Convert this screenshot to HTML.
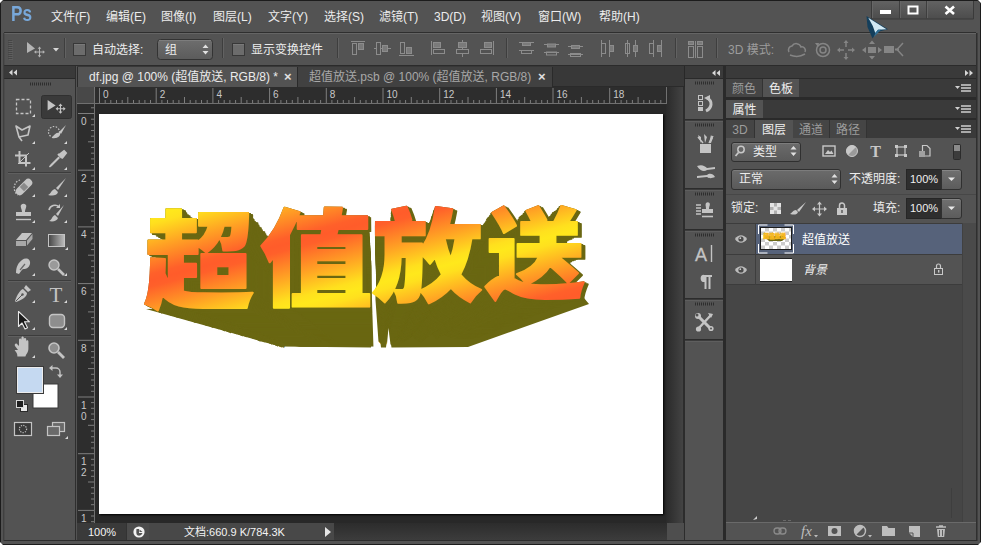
<!DOCTYPE html>
<html lang="zh-CN">
<head>
<meta charset="utf-8">
<title>Photoshop</title>
<style>
*{box-sizing:border-box;margin:0;padding:0}
html,body{width:981px;height:545px;overflow:hidden;background:#535353}
body{position:relative;font-family:"Liberation Sans","Noto Sans CJK SC",sans-serif;font-size:12px;color:#e6e6e6}
.abs{position:absolute}
#win{position:absolute;left:0;top:0;width:981px;height:545px;background:#535353;overflow:hidden}
/* menu */
#menubar{position:absolute;left:0;top:0;width:981px;height:32px;background:#535353}
#menubar .m{position:absolute;top:9px;font-size:12px;line-height:16px;color:#ececec;white-space:nowrap}
#pslogo{position:absolute;left:11px;top:0px;font-family:"Liberation Sans",sans-serif;font-weight:bold;font-size:22px;line-height:28px;color:#78a8da;transform:scaleX(0.78);transform-origin:0 0}
/* options bar */
#optbar{position:absolute;left:4px;top:32px;width:972px;height:34px;background:#535353;border-top:1px solid #2f2f2f;border-bottom:1px solid #2b2b2b;box-shadow:inset 0 1px 0 #656565}
.sep{position:absolute;top:38px;width:2px;height:22px;border-left:1px solid #3a3a3a;border-right:1px solid #626262}
.chk{position:absolute;width:13px;height:13px;background:#6a6a6a;border:1px solid #3a3a3a;box-shadow:inset 0 0 0 1px #777}
.lbl{position:absolute;white-space:nowrap;font-size:12px;line-height:16px;color:#ececec}
.dd{position:absolute;border:1px solid #303030;border-radius:3px;background:linear-gradient(#6b6b6b,#5a5a5a);box-shadow:inset 0 1px 0 #7c7c7c}
/* tools */
#tools{position:absolute;left:4px;top:66px;width:72px;height:474px;background:#535353;border-right:1px solid #2e2e2e}
#toolshead{position:absolute;left:0;top:0;width:71px;height:13px;background:#3a3a3a;border-bottom:1px solid #2a2a2a}
/* doc */
#doc{position:absolute;left:77px;top:66px;width:608px;height:475px;background:#282828;overflow:hidden}
#tabbar{position:absolute;left:0;top:0;width:607px;height:21px;background:#383838;border-bottom:1px solid #2a2a2a}
.tab{position:absolute;top:1px;height:20px;font-size:12px;line-height:21px;white-space:nowrap;padding-left:11px}
.tx{position:absolute;top:-1px;font-size:13px;font-weight:bold;color:#e0e0e0}
#tab1{left:0;width:221px;background:#535353;color:#ececec;border-right:1px solid #2a2a2a;border-left:1px solid #2a2a2a}
#tab2{left:221px;width:255px;background:#414141;color:#a8a8a8;border-right:1px solid #2a2a2a}
#canvas{position:absolute;left:22px;top:48px;width:564px;height:400px;background:#fff;box-shadow:1px 1px 2px #000}
#vscroll{position:absolute;left:589px;top:21px;width:19px;height:458px;background:linear-gradient(90deg,#2a2a2a,#434343);border-right:2px solid #2c2c2c}
#status{position:absolute;left:0;top:457px;width:607px;height:18px;background:#3a3a3a}
#zoomf{position:absolute;left:0;top:0;width:48px;height:17px;background:#3a3a3a;color:#f4f4f4;font-size:11px;line-height:18px;padding-left:11px}
#sticon{position:absolute;left:49px;top:0;width:23px;height:17px;background:#4c4c4c;border-left:1px solid #333}
#sticon svg{position:absolute;left:6px;top:3px}
#sttext{position:absolute;left:72px;top:0;width:185px;height:17px;background:#484848;color:#f4f4f4;font-size:11px;line-height:18px;padding-left:35px;white-space:nowrap}
#starrow{position:absolute;left:248px;top:4px;width:0;height:0;border-left:6px solid #e6e6e6;border-top:5px solid transparent;border-bottom:5px solid transparent}
#hscroll{position:absolute;left:257px;top:0;width:333px;height:17px;background:linear-gradient(#2c2c2c,#3c3c3c)}
#corner{position:absolute;left:590px;top:0;width:17px;height:17px;background:#4e4e4e}
/* right */
#dock{position:absolute;left:685px;top:66px;width:291px;height:474px;overflow:hidden;background:#535353}

/* dock */
#dockhead{position:absolute;left:0;top:0;width:291px;height:13px;background:#3a3a3a;border-bottom:1px solid #2a2a2a}
#iconcol{position:absolute;left:0;top:13px;width:38px;height:466px;background:#535353}
#dockgap{position:absolute;left:38px;top:0;width:3px;height:479px;background:#2a2a2a}
#panels{position:absolute;left:41px;top:13px;width:250px;height:466px;background:#2a2a2a}
.tabrow{position:absolute;left:0;width:250px;height:18px;background:#3a3a3a}
.ptab{position:absolute;top:0;height:18px;font-size:12px;line-height:20px;overflow:hidden;text-align:center;white-space:nowrap}
.ptab.on{background:#535353;color:#f0f0f0}
.ptab.off{background:#454545;color:#9c9c9c;border-right:1px solid #333}
.pmenu{position:absolute;right:5px;top:5px;width:16px;height:9px}
#layers{position:absolute;left:0;top:59px;width:250px;height:384px;background:#535353}
#layempty{position:absolute;left:0;top:85px;width:250px;height:299px;background:#464646}
#layscroll{position:absolute;left:236px;top:85px;width:14px;height:299px;background:#4a4a4a;border-left:1px solid #414141}
#laybar{position:absolute;left:0;top:443px;width:250px;height:19px;background:#535353;border-top:1px solid #6a6a6a}
.vbox{position:absolute;background:#2e2e2e;border:1px solid #262626;color:#f0f0f0;font-size:11px;line-height:19px;text-align:center}
.abtn{position:absolute;border:1px solid #303030;border-radius:0 3px 3px 0;background:linear-gradient(#707070,#5c5c5c);box-shadow:inset 0 1px 0 #858585}
.lrow{position:absolute;left:0;width:236px;height:31px;border-bottom:1px solid #3c3c3c;background:#535353}
</style>
</head>
<body>
<div id="win">
  <div id="menubar">
    <div id="pslogo">Ps</div>
    <div class="m" style="left:51px">文件(F)</div>
    <div class="m" style="left:106px">编辑(E)</div>
    <div class="m" style="left:161px">图像(I)</div>
    <div class="m" style="left:213px">图层(L)</div>
    <div class="m" style="left:268px">文字(Y)</div>
    <div class="m" style="left:324px">选择(S)</div>
    <div class="m" style="left:379px">滤镜(T)</div>
    <div class="m" style="left:434px">3D(D)</div>
    <div class="m" style="left:481px">视图(V)</div>
    <div class="m" style="left:538px">窗口(W)</div>
    <div class="m" style="left:599px">帮助(H)</div>
  </div>
  <div id="optbar"></div><!--OPT--><svg class="abs" style="left:0;top:32px" width="981" height="34" viewBox="0 32 981 34"><path d="M9 40v19M11 40v19" stroke="#3a3a3a" stroke-width="1" stroke-dasharray="1 1"/><path d="M10 41v19M12 41v19" stroke="#6a6a6a" stroke-width="1" stroke-dasharray="1 1"/><path d="M27 42l8 6.500l-8 4.500z" fill="#b4b4b4"/><path d="M39.500 48v8M35.500 52h8" stroke="#b4b4b4" stroke-width="1"/><path d="M39.500 46.500l1.800 2.200h-3.600zM39.500 57.500l1.800 -2.200h-3.600zM34 52l2.200 -1.800v3.600zM45 52l-2.200 -1.800v3.600z" fill="#b4b4b4"/><path d="M53 48h6l-3 3.500z" fill="#d6d6d6"/><path d="M64.5 38v20" stroke="#3e3e3e"/><path d="M65.5 38v20" stroke="#626262"/><path d="M222.5 38v20" stroke="#3e3e3e"/><path d="M223.5 38v20" stroke="#626262"/><path d="M337.5 38v20" stroke="#3e3e3e"/><path d="M338.5 38v20" stroke="#626262"/><path d="M506.5 38v20" stroke="#3e3e3e"/><path d="M507.5 38v20" stroke="#626262"/><path d="M675.5 38v20" stroke="#3e3e3e"/><path d="M676.5 38v20" stroke="#626262"/><path d="M716.5 38v20" stroke="#3e3e3e"/><path d="M717.5 38v20" stroke="#626262"/><rect x="73.5" y="43.500" width="12" height="12" fill="#6c6c6c" stroke="#383838"/><path d="M74 44.500h11" stroke="#7a7a7a"/><rect x="232.5" y="43.500" width="12" height="12" fill="#6c6c6c" stroke="#383838"/><path d="M233 44.500h11" stroke="#7a7a7a"/><defs><linearGradient id="ddg" x1="0" y1="0" x2="0" y2="1"><stop offset="0" stop-color="#6e6e6e"/><stop offset="1" stop-color="#5b5b5b"/></linearGradient></defs><rect x="157.500" y="39.500" width="55" height="20" rx="3" fill="url(#ddg)" stroke="#333"/><path d="M159 40.500h52" stroke="#7d7d7d"/><path d="M202.500 48l3 -3.500l3 3.500zM202.500 51l3 3.500l3 -3.500z" fill="#e0e0e0"/><path d="M351 41.500h14" stroke="#8c8c8c"/><rect x="352.5" y="43.5" width="4" height="11" fill="none" stroke="#8c8c8c" stroke-width="1"/><rect x="358.5" y="43.5" width="5" height="6" fill="#7a7a7a" stroke="#8c8c8c" stroke-width="1"/><path d="M374 48.500h17" stroke="#8c8c8c"/><rect x="376.5" y="42.5" width="4" height="12" fill="#535353" stroke="#8c8c8c" stroke-width="1"/><rect x="382.5" y="45.5" width="5" height="6" fill="#7a7a7a" stroke="#8c8c8c" stroke-width="1"/><path d="M399 55.500h15" stroke="#8c8c8c"/><rect x="400.5" y="42.5" width="4" height="11" fill="none" stroke="#8c8c8c" stroke-width="1"/><rect x="406.5" y="47.5" width="5" height="6" fill="#7a7a7a" stroke="#8c8c8c" stroke-width="1"/><path d="M431.500 41v14" stroke="#8c8c8c"/><rect x="433.5" y="42.5" width="7" height="5" fill="#7a7a7a" stroke="#8c8c8c" stroke-width="1"/><rect x="433.5" y="49.5" width="11" height="4" fill="none" stroke="#8c8c8c" stroke-width="1"/><path d="M462.500 40v17" stroke="#8c8c8c"/><rect x="458.5" y="42.5" width="8" height="5" fill="#7a7a7a" stroke="#8c8c8c" stroke-width="1"/><rect x="456.5" y="49.5" width="12" height="4" fill="#535353" stroke="#8c8c8c" stroke-width="1"/><path d="M493.500 41v14" stroke="#8c8c8c"/><rect x="484.5" y="42.5" width="7" height="5" fill="#7a7a7a" stroke="#8c8c8c" stroke-width="1"/><rect x="480.5" y="49.5" width="11" height="4" fill="none" stroke="#8c8c8c" stroke-width="1"/><path d="M519 42.500h15M519 50.500h15" stroke="#8c8c8c"/><rect x="522.5" y="42.5" width="8" height="3" fill="#7a7a7a" stroke="#8c8c8c" stroke-width="1"/><rect x="521.5" y="50.5" width="10" height="3" fill="none" stroke="#8c8c8c" stroke-width="1"/><path d="M544 44.500h15M544 52.500h15" stroke="#8c8c8c"/><rect x="547.5" y="44.0" width="8" height="3" fill="#7a7a7a" stroke="#8c8c8c" stroke-width="1"/><rect x="546.5" y="52.0" width="10" height="3" fill="none" stroke="#8c8c8c" stroke-width="1"/><path d="M568 46.500h15M568 54.500h15" stroke="#8c8c8c"/><rect x="571.5" y="45.5" width="8" height="3" fill="#7a7a7a" stroke="#8c8c8c" stroke-width="1"/><rect x="570.5" y="53.5" width="10" height="3" fill="none" stroke="#8c8c8c" stroke-width="1"/><path d="M601.500 40v17M609.500 40v17" stroke="#8c8c8c"/><rect x="601.5" y="43.5" width="4" height="10" fill="none" stroke="#8c8c8c" stroke-width="1"/><rect x="609.5" y="45.5" width="4" height="6" fill="#7a7a7a" stroke="#8c8c8c" stroke-width="1"/><path d="M627.500 40v17M635.500 40v17" stroke="#8c8c8c"/><rect x="625.5" y="43.5" width="4" height="10" fill="none" stroke="#8c8c8c" stroke-width="1"/><rect x="633.5" y="45.5" width="4" height="6" fill="#7a7a7a" stroke="#8c8c8c" stroke-width="1"/><path d="M653.500 40v17M661.500 40v17" stroke="#8c8c8c"/><rect x="649.5" y="43.5" width="4" height="10" fill="none" stroke="#8c8c8c" stroke-width="1"/><rect x="657.5" y="45.5" width="4" height="6" fill="#7a7a7a" stroke="#8c8c8c" stroke-width="1"/><rect x="688.5" y="41.5" width="5" height="3" fill="#7a7a7a" stroke="#8c8c8c" stroke-width="1"/><rect x="688.5" y="46.5" width="5" height="11" fill="none" stroke="#8c8c8c" stroke-width="1"/><rect x="697.5" y="41.5" width="5" height="3" fill="#7a7a7a" stroke="#8c8c8c" stroke-width="1"/><rect x="697.5" y="46.5" width="5" height="11" fill="none" stroke="#8c8c8c" stroke-width="1"/><path d="M695.500 41v17" stroke="#8c8c8c"/><path d="M789 52a4 4 0 0 1 3 -6a5 5 0 0 1 9 1a3.500 3.500 0 0 1 4 5" fill="none" stroke="#858585" stroke-width="1.500"/><path d="M790 55c5 2 10 2 15 -1" fill="none" stroke="#858585" stroke-width="1.500"/><circle cx="823" cy="50" r="6.500" fill="none" stroke="#858585" stroke-width="1.500"/><circle cx="823" cy="50" r="3" fill="none" stroke="#858585" stroke-width="1.500"/><path d="M815 43l4 0l-1 4z" fill="#858585"/><path d="M846 41v6M846 53v6M838 50h6M848 50h6" stroke="#858585" stroke-width="1.500"/><path d="M846 40l2.500 3h-5zM846 60l2.500 -3h-5zM837 50l3 -2.500v5zM855 50l-3 -2.500v5z" fill="#858585"/><path d="M869 44l3 -3.500l3 3.500zM869 56l3 3.500l3 -3.500zM866 47l-4 3l4 3zM878 47l4 3l-4 3z" fill="#858585"/><rect x="868" y="47" width="8" height="6" fill="#858585"/><rect x="884" y="46" width="10" height="7" fill="#858585"/><path d="M903 43l-6 6.500l6 6.500" fill="none" stroke="#858585" stroke-width="1.500"/><path d="M899 49.500h-4" stroke="#858585" stroke-width="2"/></svg><div class="lbl" style="left:92px;top:42px">自动选择:</div><div class="lbl" style="left:165px;top:42px">组</div><div class="lbl" style="left:251px;top:42px">显示变换控件</div><div class="lbl" style="left:728px;top:42px;color:#9c9c9c">3D 模式:</div><!--/OPT-->
  <div id="tools"><div id="toolshead"></div><!--TOOLS--><svg class="abs" style="left:0;top:0" width="72" height="479" viewBox="0 0 72 479"><rect x="37.5" y="29.5" width="30" height="23" rx="2" fill="#3a3a3a" stroke="#303030"/><path d="M5 6.5l3.500 -3v6zM9.5 6.5l3.500 -3v6z" fill="#d8d8d8"/><path d="M26 18h21" stroke="#2e2e2e" stroke-width="3" stroke-dasharray="1 1"/><rect x="12.5" y="33.5" width="14" height="14" fill="none" stroke="#c4c4c4" stroke-width="1.3" stroke-dasharray="3 2"/><path d="M31 48v3h-3z" fill="#d8d8d8"/><path d="M43.6 34l8 5.600l-8 4.800z" fill="#c4c4c4"/><path d="M56.5 39v7.500M53 42.7h7.500" stroke="#c4c4c4" stroke-width="1.100"/><path d="M56.5 37.599999999999994l2 2.300h-4zM56.5 47.8l2 -2.300h-4zM51.6 42.7l2.300 -2v4zM61.599999999999994 42.7l-2.300 -2v4z" fill="#c4c4c4"/><path d="M12 60l6 4l8 -4l-2 9l-9 2l-3-11zM15 71l3 4" fill="none" stroke="#c4c4c4" stroke-width="1.6" stroke-linejoin="round"/><path d="M31 75v3h-3z" fill="#d8d8d8"/><circle cx="50" cy="66" r="5.5" fill="none" stroke="#c4c4c4" stroke-width="1.2" stroke-dasharray="1.5 1.5"/><path d="M62 59l-7 7l2 2z" fill="#c4c4c4"/><path d="M48 72c2-4 5-6 8-5c1 3-3 6-8 5z" fill="#c4c4c4"/><path d="M63 75v3h-3z" fill="#d8d8d8"/><path d="M15.5 85v12h11M11 89.5h11v11" fill="none" stroke="#c4c4c4" stroke-width="2"/><path d="M14 98l11 -11" stroke="#c4c4c4" stroke-width="1"/><path d="M31 101v3h-3z" fill="#d8d8d8"/><path d="M60 85l2 2l-3.5 4.5l-3 -3zM54 88l4 4" stroke="#c4c4c4" stroke-width="2" fill="#c4c4c4"/><path d="M55 91l-8 8l-1.5 2l2 -1.5l8 -8" fill="none" stroke="#c4c4c4" stroke-width="1.4"/><path d="M63 101v3h-3z" fill="#d8d8d8"/><path d="M4 106.5h63" stroke="#3c3c3c"/><path d="M4 107.5h63" stroke="#5f5f5f"/><g transform="rotate(-45 20 121)"><rect x="10" y="117" width="20" height="8" rx="4" fill="#c4c4c4"/><rect x="17" y="118" width="6" height="6" fill="#8a8a8a"/></g><path d="M16 114a7 8 0 0 0 -2 15" fill="none" stroke="#c4c4c4" stroke-width="1.2" stroke-dasharray="1.5 1.5"/><path d="M31 128v3h-3z" fill="#d8d8d8"/><path d="M62 112l-10 10l2 2z" fill="#c4c4c4"/><path d="M44 129c3-1 3-5 7-6l3 3c-1 4-6 4-10 3z" fill="#c4c4c4"/><path d="M63 128v3h-3z" fill="#d8d8d8"/><path d="M17 139a3.5 3.5 0 0 1 5 0c1 2-1 4-1 7h6v4h-15v-4h6c0-3-2-5-1-7z" fill="#c4c4c4"/><path d="M12 153.5h15" stroke="#c4c4c4" stroke-width="1.4"/><path d="M31 154v3h-3z" fill="#d8d8d8"/><path d="M60 139l-8 9l2 2z" fill="#c4c4c4"/><path d="M45 155c3-1 3-5 6-6l3 3c-1 3-5 4-9 3z" fill="#c4c4c4"/><path d="M45 144a6 6 0 0 1 10 -3" fill="none" stroke="#c4c4c4" stroke-width="1.6"/><path d="M56 138v4h-4z" fill="#c4c4c4"/><path d="M63 154v3h-3z" fill="#d8d8d8"/><path d="M18 167h10l-6 7h-10z" fill="#c4c4c4"/><path d="M12 175h10v5h-10zM23 174.5l5.5 -6.5v5l-5.5 6.5z" fill="#a8a8a8"/><path d="M31 181v3h-3z" fill="#d8d8d8"/><defs><linearGradient id="gr"><stop offset="0" stop-color="#444"/><stop offset="1" stop-color="#bdbdbd"/></linearGradient></defs><rect x="44.5" y="168.5" width="16" height="12" fill="url(#gr)" stroke="#c4c4c4"/><path d="M64 181v3h-3z" fill="#d8d8d8"/><path d="M18 194c4-3 9-1 8 4c-1 4-4 5-6 5c-2 0-3 2-5 5l-3-1c0-6 2-10 6-13z" fill="#c4c4c4"/><path d="M16 204l5 -6" stroke="#666" stroke-width="1.2"/><path d="M31 207v3h-3z" fill="#d8d8d8"/><circle cx="50" cy="199" r="5" fill="#9a9a9a" stroke="#c4c4c4" stroke-width="1.4"/><path d="M54 203l6 6" stroke="#c4c4c4" stroke-width="2.6"/><path d="M63 207v3h-3z" fill="#d8d8d8"/><path d="M4 214.5h63" stroke="#3c3c3c"/><path d="M4 215.5h63" stroke="#5f5f5f"/><path d="M22 219l5 5l-3 2l-4 -4zM19 223l4 4c0 4-5 7-11 9l-1-1c2-6 5-11 8-12z" fill="#c4c4c4"/><path d="M12 235l6 -6" stroke="#555" stroke-width="1"/><circle cx="18.5" cy="228.5" r="1.2" fill="#555"/><path d="M31 234v3h-3z" fill="#d8d8d8"/><text x="52" y="236" font-family="Liberation Serif,serif" font-size="21" fill="#c4c4c4" text-anchor="middle">T</text><path d="M63 234v3h-3z" fill="#d8d8d8"/><path d="M14.5 245.5v15l3.5 -3.5l3 6l2.5 -1.2l-3 -6h5z" fill="#1a1a1a" stroke="#e8e8e8" stroke-width="1.1" stroke-linejoin="round"/><path d="M31 261v3h-3z" fill="#d8d8d8"/><rect x="45.5" y="248.5" width="15" height="13" rx="3.5" fill="#8e8e8e" stroke="#c4c4c4" stroke-width="1.4"/><path d="M63 261v3h-3z" fill="#d8d8d8"/><path d="M4 269.5h63" stroke="#3c3c3c"/><path d="M4 270.5h63" stroke="#5f5f5f"/><path d="M14 284l-3 -4c-1 -2 1 -3 2 -2l2 2v-6c0-2 2.4-2 2.4 0v-2c0-2 2.4-2 2.4 0v1.5c0-2 2.4-2 2.4 0v2c0-1.6 2.2-1.6 2.2 0v7c0 4-2 5-3 8h-8c0-3-1-4-2.800-6.500z" fill="#c4c4c4"/><path d="M31 289v3h-3z" fill="#d8d8d8"/><circle cx="50" cy="282" r="5" fill="#8e8e8e" stroke="#c4c4c4" stroke-width="1.6"/><path d="M54 286l6 6" stroke="#c4c4c4" stroke-width="2.8"/><rect x="29" y="318" width="25" height="24" fill="#fff" stroke="#3a3a3a" stroke-width="1"/><rect x="13.5" y="301.5" width="25" height="25" fill="#c5d9f1" stroke="#ececec" stroke-width="1"/><rect x="12.5" y="300.5" width="27" height="27" fill="none" stroke="#3a3a3a" stroke-width="1"/><path d="M48 302h4a4 4 0 0 1 4 4v3" fill="none" stroke="#c4c4c4" stroke-width="1.4"/><path d="M45 302l3.500 -3v6zM56 312l-3 -3.500h6z" fill="#c4c4c4"/><rect x="16.5" y="338.5" width="7" height="7" fill="#e8e8e8" stroke="#2a2a2a"/><rect x="12.5" y="334.5" width="7" height="7" fill="#1e1e1e" stroke="#d8d8d8"/><rect x="10.5" y="356.5" width="17" height="13" fill="#3a3a3a" stroke="#c4c4c4" stroke-width="1.2"/><circle cx="19" cy="363" r="3.6" fill="none" stroke="#c4c4c4" stroke-width="1.2" stroke-dasharray="1.2 1.2"/><rect x="48.5" y="356.5" width="12" height="9" fill="#6a6a6a" stroke="#c4c4c4" stroke-width="1.2"/><rect x="43.5" y="360.5" width="12" height="9" fill="#6a6a6a" stroke="#c4c4c4" stroke-width="1.2"/><path d="M64 370v3h-3z" fill="#d8d8d8"/></svg><!--/TOOLS--></div>
  <div id="doc">
    <div id="tabbar">
      <div class="tab" id="tab1">df.jpg @ 100% (超值放送, RGB/8) *<span class="tx" style="left:206px">×</span></div>
      <div class="tab" id="tab2">超值放送.psb @ 100% (超值放送, RGB/8)<span class="tx" style="left:240px">×</span></div>
    </div>
    <div id="vscroll"></div>
    <div id="canvas"></div>
    <div id="status">
      <div id="zoomf">100%</div>
      <div id="sticon"><svg width="12" height="12" viewBox="0 0 12 12"><circle cx="6" cy="6" r="5.600" fill="#f2f2f2"/><path d="M3.500 3h2.500v4h3.500c-0.500 2 -3 3 -4.500 2.500c-1.500 -0.500 -2 -2 -1.500 -6.500z" fill="#555"/><path d="M6.500 3.500l3 2.500h-3z" fill="#555"/></svg></div>
      <div id="sttext">文档:660.9 K/784.3K</div>
      <div id="starrow"></div>
      <div id="hscroll"></div>
      <div id="corner"></div>
    </div>
  </div>
  <!--RULERS--><svg class="abs" style="left:77px;top:87px" width="591" height="436" viewBox="77 87 591 436"><rect x="77" y="87" width="590" height="16" fill="#2d2d2d"/><rect x="77" y="103" width="18" height="420" fill="#2d2d2d"/><rect x="77" y="87" width="18" height="16" fill="#484848"/><path d="M77 103.500h590" stroke="#707070"/><path d="M94.500 87v436" stroke="#707070"/><path d="M666.500 87v17" stroke="#707070"/><path d="M99.5 88v15M105.2 100v3M110.8 100v3M116.5 100v3M122.2 100v3M127.8 97v6M133.5 100v3M139.2 100v3M144.9 100v3M150.5 100v3M156.2 88v15M161.9 100v3M167.5 100v3M173.2 100v3M178.9 100v3M184.5 97v6M190.2 100v3M195.9 100v3M201.5 100v3M207.2 100v3M212.9 88v15M218.6 100v3M224.2 100v3M229.9 100v3M235.6 100v3M241.2 97v6M246.9 100v3M252.6 100v3M258.2 100v3M263.9 100v3M269.6 88v15M275.2 100v3M280.9 100v3M286.6 100v3M292.3 100v3M297.9 97v6M303.6 100v3M309.3 100v3M314.9 100v3M320.6 100v3M326.3 88v15M331.9 100v3M337.6 100v3M343.3 100v3M348.9 100v3M354.6 97v6M360.3 100v3M366.0 100v3M371.6 100v3M377.3 100v3M383.0 88v15M388.6 100v3M394.3 100v3M400.0 100v3M405.6 100v3M411.3 97v6M417.0 100v3M422.7 100v3M428.3 100v3M434.0 100v3M439.7 88v15M445.3 100v3M451.0 100v3M456.7 100v3M462.3 100v3M468.0 97v6M473.7 100v3M479.3 100v3M485.0 100v3M490.7 100v3M496.4 88v15M502.0 100v3M507.7 100v3M513.4 100v3M519.0 100v3M524.7 97v6M530.4 100v3M536.0 100v3M541.7 100v3M547.4 100v3M553.0 88v15M558.7 100v3M564.4 100v3M570.1 100v3M575.7 100v3M581.4 97v6M587.1 100v3M592.7 100v3M598.4 100v3M604.1 100v3M609.7 88v15M615.4 100v3M621.1 100v3M626.7 100v3M632.4 100v3M638.1 97v6M643.8 100v3M649.4 100v3M655.1 100v3M660.8 100v3" stroke="#7e7e7e" stroke-width="1"/><path d="M78 113.5h16M91 119.2h3M91 124.8h3M91 130.5h3M91 136.2h3M88 141.8h6M91 147.5h3M91 153.2h3M91 158.9h3M91 164.5h3M78 170.2h16M91 175.9h3M91 181.5h3M91 187.2h3M91 192.9h3M88 198.5h6M91 204.2h3M91 209.9h3M91 215.5h3M91 221.2h3M78 226.9h16M91 232.6h3M91 238.2h3M91 243.9h3M91 249.6h3M88 255.2h6M91 260.9h3M91 266.6h3M91 272.2h3M91 277.9h3M78 283.6h16M91 289.2h3M91 294.9h3M91 300.6h3M91 306.3h3M88 311.9h6M91 317.6h3M91 323.3h3M91 328.9h3M91 334.6h3M78 340.3h16M91 345.9h3M91 351.6h3M91 357.3h3M91 362.9h3M88 368.6h6M91 374.3h3M91 380.0h3M91 385.6h3M91 391.3h3M78 397.0h16M91 402.6h3M91 408.3h3M91 414.0h3M91 419.6h3M88 425.3h6M91 431.0h3M91 436.7h3M91 442.3h3M91 448.0h3M78 453.7h16M91 459.3h3M91 465.0h3M91 470.7h3M91 476.3h3M88 482.0h6M91 487.7h3M91 493.3h3M91 499.0h3M91 504.7h3M78 510.4h16M91 516.0h3M91 521.7h3M91 107.8h3" stroke="#7e7e7e" stroke-width="1"/><text x="103.0" y="97.500" font-family="Liberation Sans,sans-serif" font-size="10" fill="#c8c8c8">0</text><text x="159.7" y="97.500" font-family="Liberation Sans,sans-serif" font-size="10" fill="#c8c8c8">2</text><text x="216.4" y="97.500" font-family="Liberation Sans,sans-serif" font-size="10" fill="#c8c8c8">4</text><text x="273.1" y="97.500" font-family="Liberation Sans,sans-serif" font-size="10" fill="#c8c8c8">6</text><text x="329.8" y="97.500" font-family="Liberation Sans,sans-serif" font-size="10" fill="#c8c8c8">8</text><text x="386.5" y="97.500" font-family="Liberation Sans,sans-serif" font-size="10" fill="#c8c8c8">10</text><text x="443.2" y="97.500" font-family="Liberation Sans,sans-serif" font-size="10" fill="#c8c8c8">12</text><text x="499.9" y="97.500" font-family="Liberation Sans,sans-serif" font-size="10" fill="#c8c8c8">14</text><text x="556.5" y="97.500" font-family="Liberation Sans,sans-serif" font-size="10" fill="#c8c8c8">16</text><text x="613.2" y="97.500" font-family="Liberation Sans,sans-serif" font-size="10" fill="#c8c8c8">18</text><text x="81" y="125.0" font-family="Liberation Sans,sans-serif" font-size="10" fill="#c8c8c8">0</text><text x="81" y="181.7" font-family="Liberation Sans,sans-serif" font-size="10" fill="#c8c8c8">2</text><text x="81" y="238.4" font-family="Liberation Sans,sans-serif" font-size="10" fill="#c8c8c8">4</text><text x="81" y="295.1" font-family="Liberation Sans,sans-serif" font-size="10" fill="#c8c8c8">6</text><text x="81" y="351.8" font-family="Liberation Sans,sans-serif" font-size="10" fill="#c8c8c8">8</text><text x="81" y="408.5" font-family="Liberation Sans,sans-serif" font-size="10" fill="#c8c8c8">1</text><text x="81" y="419.5" font-family="Liberation Sans,sans-serif" font-size="10" fill="#c8c8c8">0</text><text x="81" y="465.2" font-family="Liberation Sans,sans-serif" font-size="10" fill="#c8c8c8">1</text><text x="81" y="476.2" font-family="Liberation Sans,sans-serif" font-size="10" fill="#c8c8c8">2</text><text x="81" y="521.9" font-family="Liberation Sans,sans-serif" font-size="10" fill="#c8c8c8">1</text></svg><!--/RULERS-->
  <!--TEXT3D--><svg class="abs" style="left:99px;top:113px" width="565" height="401" viewBox="99 113 565 401"><defs><linearGradient id="fg" gradientUnits="userSpaceOnUse" x1="155" y1="215" x2="171.1" y2="274.9" spreadMethod="reflect"><stop offset="0" stop-color="#ffe81c"/><stop offset="0.12" stop-color="#ffe01e"/><stop offset="0.5" stop-color="#ffa024"/><stop offset="0.9" stop-color="#ff602a"/><stop offset="1" stop-color="#ff5c2a"/></linearGradient><mask id="tm" maskUnits="userSpaceOnUse" x="130" y="190" width="480" height="140"><text transform="translate(143.89 300.02) scale(1.1032 1.0589)" font-family="Liberation Sans,Noto Sans CJK SC,sans-serif" font-weight="900" font-size="100" stroke-linejoin="round" fill="#fff" stroke="#fff" stroke-width="1.8">超</text><text transform="translate(259.76 297.13) scale(1.126 1.0429)" font-family="Liberation Sans,Noto Sans CJK SC,sans-serif" font-weight="900" font-size="100" stroke-linejoin="round" fill="#fff" stroke="#fff" stroke-width="1.8">值</text><text transform="translate(371.89 293.08) scale(1.1032 1.002)" font-family="Liberation Sans,Noto Sans CJK SC,sans-serif" font-weight="900" font-size="100" stroke-linejoin="round" fill="#fff" stroke="#fff" stroke-width="1.8">放</text><text transform="translate(485.88 290.32) scale(0.9921 0.9818)" font-family="Liberation Sans,Noto Sans CJK SC,sans-serif" font-weight="900" font-size="100" stroke-linejoin="round" fill="#fff" stroke="#fff" stroke-width="1.8">送</text></mask></defs><path d="M146 309L280 346.500L371 347.500L372 322L300 305z" fill="#6a6712"/><path d="M378 322L381 347.500L386 347.500L388.500 330L391.500 347.500L468 347L589 304L584 298L440 300z" fill="#6a6712"/><g font-family="Liberation Sans,Noto Sans CJK SC,sans-serif" font-weight="900" font-size="100" stroke-linejoin="round" fill="#6a6712" stroke="#6a6712" stroke-width="1.8"><text transform="translate(277.90 342.76) scale(0.4744 0.4553)">超</text><text transform="translate(327.73 341.52) scale(0.4842 0.4484)">值</text><text transform="translate(375.94 339.77) scale(0.4744 0.4309)">放</text><text transform="translate(424.96 338.59) scale(0.4266 0.4222)">送</text><text transform="translate(275.81 342.09) scale(0.4842 0.4648)">超</text><text transform="translate(326.66 340.82) scale(0.4942 0.4577)">值</text><text transform="translate(375.88 339.04) scale(0.4842 0.4398)">放</text><text transform="translate(425.91 337.83) scale(0.4354 0.4309)">送</text><text transform="translate(273.71 341.42) scale(0.4940 0.4742)">超</text><text transform="translate(325.60 340.13) scale(0.5042 0.4670)">值</text><text transform="translate(375.82 338.32) scale(0.4940 0.4487)">放</text><text transform="translate(426.86 337.08) scale(0.4443 0.4397)">送</text><text transform="translate(271.62 340.76) scale(0.5039 0.4836)">超</text><text transform="translate(324.54 339.44) scale(0.5143 0.4763)">值</text><text transform="translate(375.75 337.59) scale(0.5039 0.4576)">放</text><text transform="translate(427.81 336.33) scale(0.4531 0.4484)">送</text><text transform="translate(269.53 340.09) scale(0.5137 0.4931)">超</text><text transform="translate(323.48 338.74) scale(0.5243 0.4856)">值</text><text transform="translate(375.69 336.86) scale(0.5137 0.4666)">放</text><text transform="translate(428.77 335.57) scale(0.4619 0.4572)">送</text><text transform="translate(267.43 339.42) scale(0.5235 0.5025)">超</text><text transform="translate(322.42 338.05) scale(0.5343 0.4949)">值</text><text transform="translate(375.63 336.13) scale(0.5235 0.4755)">放</text><text transform="translate(429.72 334.82) scale(0.4708 0.4659)">送</text><text transform="translate(265.34 338.75) scale(0.5333 0.5119)">超</text><text transform="translate(321.35 337.35) scale(0.5444 0.5042)">值</text><text transform="translate(375.56 335.40) scale(0.5333 0.4844)">放</text><text transform="translate(430.67 334.06) scale(0.4796 0.4746)">送</text><text transform="translate(263.25 338.08) scale(0.5432 0.5213)">超</text><text transform="translate(320.29 336.66) scale(0.5544 0.5135)">值</text><text transform="translate(375.50 334.67) scale(0.5432 0.4933)">放</text><text transform="translate(431.62 333.31) scale(0.4885 0.4834)">送</text><text transform="translate(261.15 337.42) scale(0.5530 0.5308)">超</text><text transform="translate(319.23 335.97) scale(0.5644 0.5228)">值</text><text transform="translate(375.44 333.94) scale(0.5530 0.5023)">放</text><text transform="translate(432.57 332.55) scale(0.4973 0.4921)">送</text><text transform="translate(259.06 336.75) scale(0.5628 0.5402)">超</text><text transform="translate(318.17 335.27) scale(0.5744 0.5320)">值</text><text transform="translate(375.37 333.21) scale(0.5628 0.5112)">放</text><text transform="translate(433.53 331.80) scale(0.5061 0.5009)">送</text><text transform="translate(256.96 336.08) scale(0.5726 0.5496)">超</text><text transform="translate(317.11 334.58) scale(0.5845 0.5413)">值</text><text transform="translate(375.31 332.48) scale(0.5726 0.5201)">放</text><text transform="translate(434.48 331.05) scale(0.5150 0.5096)">送</text><text transform="translate(254.87 335.41) scale(0.5825 0.5591)">超</text><text transform="translate(316.05 333.89) scale(0.5945 0.5506)">值</text><text transform="translate(375.25 331.75) scale(0.5825 0.5290)">放</text><text transform="translate(435.43 330.29) scale(0.5238 0.5184)">送</text><text transform="translate(252.78 334.75) scale(0.5923 0.5685)">超</text><text transform="translate(314.98 333.19) scale(0.6045 0.5599)">值</text><text transform="translate(375.18 331.02) scale(0.5923 0.5379)">放</text><text transform="translate(436.38 329.54) scale(0.5326 0.5271)">送</text><text transform="translate(250.68 334.08) scale(0.6021 0.5779)">超</text><text transform="translate(313.92 332.50) scale(0.6145 0.5692)">值</text><text transform="translate(375.12 330.29) scale(0.6021 0.5469)">放</text><text transform="translate(437.33 328.78) scale(0.5415 0.5358)">送</text><text transform="translate(248.59 333.41) scale(0.6119 0.5874)">超</text><text transform="translate(312.86 331.81) scale(0.6246 0.5785)">值</text><text transform="translate(375.06 329.56) scale(0.6119 0.5558)">放</text><text transform="translate(438.29 328.03) scale(0.5503 0.5446)">送</text><text transform="translate(246.49 332.74) scale(0.6218 0.5968)">超</text><text transform="translate(311.80 331.11) scale(0.6346 0.5878)">值</text><text transform="translate(374.99 328.83) scale(0.6218 0.5647)">放</text><text transform="translate(439.24 327.27) scale(0.5591 0.5533)">送</text><text transform="translate(244.40 332.07) scale(0.6316 0.6062)">超</text><text transform="translate(310.74 330.42) scale(0.6446 0.5971)">值</text><text transform="translate(374.93 328.10) scale(0.6316 0.5736)">放</text><text transform="translate(440.19 326.52) scale(0.5680 0.5621)">送</text><text transform="translate(242.31 331.41) scale(0.6414 0.6157)">超</text><text transform="translate(309.67 329.73) scale(0.6547 0.6063)">值</text><text transform="translate(374.87 327.37) scale(0.6414 0.5826)">放</text><text transform="translate(441.14 325.77) scale(0.5768 0.5708)">送</text><text transform="translate(240.21 330.74) scale(0.6512 0.6251)">超</text><text transform="translate(308.61 329.03) scale(0.6647 0.6156)">值</text><text transform="translate(374.80 326.64) scale(0.6512 0.5915)">放</text><text transform="translate(442.09 325.01) scale(0.5856 0.5796)">送</text><text transform="translate(238.12 330.07) scale(0.6611 0.6345)">超</text><text transform="translate(307.55 328.34) scale(0.6747 0.6249)">值</text><text transform="translate(374.74 325.91) scale(0.6611 0.6004)">放</text><text transform="translate(443.04 324.26) scale(0.5945 0.5883)">送</text><text transform="translate(236.02 329.40) scale(0.6709 0.6439)">超</text><text transform="translate(306.49 327.65) scale(0.6847 0.6342)">值</text><text transform="translate(374.68 325.18) scale(0.6709 0.6093)">放</text><text transform="translate(444.00 323.50) scale(0.6033 0.5971)">送</text><text transform="translate(233.93 328.73) scale(0.6807 0.6534)">超</text><text transform="translate(305.43 326.95) scale(0.6948 0.6435)">值</text><text transform="translate(374.61 324.45) scale(0.6807 0.6183)">放</text><text transform="translate(444.95 322.75) scale(0.6122 0.6058)">送</text><text transform="translate(231.84 328.07) scale(0.6905 0.6628)">超</text><text transform="translate(304.36 326.26) scale(0.7048 0.6528)">值</text><text transform="translate(374.55 323.72) scale(0.6905 0.6272)">放</text><text transform="translate(445.90 322.00) scale(0.6210 0.6145)">送</text><text transform="translate(229.74 327.40) scale(0.7004 0.6722)">超</text><text transform="translate(303.30 325.56) scale(0.7148 0.6621)">值</text><text transform="translate(374.49 322.99) scale(0.7004 0.6361)">放</text><text transform="translate(446.85 321.24) scale(0.6298 0.6233)">送</text><text transform="translate(227.65 326.73) scale(0.7102 0.6817)">超</text><text transform="translate(302.24 324.87) scale(0.7249 0.6714)">值</text><text transform="translate(374.42 322.26) scale(0.7102 0.6450)">放</text><text transform="translate(447.80 320.49) scale(0.6387 0.6320)">送</text><text transform="translate(225.55 326.06) scale(0.7200 0.6911)">超</text><text transform="translate(301.18 324.18) scale(0.7349 0.6807)">值</text><text transform="translate(374.36 321.53) scale(0.7200 0.6540)">放</text><text transform="translate(448.76 319.73) scale(0.6475 0.6408)">送</text><text transform="translate(223.46 325.40) scale(0.7298 0.7005)">超</text><text transform="translate(300.12 323.48) scale(0.7449 0.6899)">值</text><text transform="translate(374.30 320.80) scale(0.7298 0.6629)">放</text><text transform="translate(449.71 318.98) scale(0.6563 0.6495)">送</text><text transform="translate(221.37 324.73) scale(0.7397 0.7100)">超</text><text transform="translate(299.05 322.79) scale(0.7549 0.6992)">值</text><text transform="translate(374.23 320.08) scale(0.7397 0.6718)">放</text><text transform="translate(450.66 318.22) scale(0.6652 0.6583)">送</text><text transform="translate(219.27 324.06) scale(0.7495 0.7194)">超</text><text transform="translate(297.99 322.10) scale(0.7650 0.7085)">值</text><text transform="translate(374.17 319.35) scale(0.7495 0.6807)">放</text><text transform="translate(451.61 317.47) scale(0.6740 0.6670)">送</text><text transform="translate(217.18 323.39) scale(0.7593 0.7288)">超</text><text transform="translate(296.93 321.40) scale(0.7750 0.7178)">值</text><text transform="translate(374.11 318.62) scale(0.7593 0.6897)">放</text><text transform="translate(452.56 316.72) scale(0.6828 0.6758)">送</text><text transform="translate(215.08 322.72) scale(0.7691 0.7383)">超</text><text transform="translate(295.87 320.71) scale(0.7850 0.7271)">值</text><text transform="translate(374.04 317.89) scale(0.7691 0.6986)">放</text><text transform="translate(453.52 315.96) scale(0.6917 0.6845)">送</text><text transform="translate(212.99 322.06) scale(0.7790 0.7477)">超</text><text transform="translate(294.81 320.02) scale(0.7951 0.7364)">值</text><text transform="translate(373.98 317.16) scale(0.7790 0.7075)">放</text><text transform="translate(454.47 315.21) scale(0.7005 0.6932)">送</text><text transform="translate(210.90 321.39) scale(0.7888 0.7571)">超</text><text transform="translate(293.74 319.32) scale(0.8051 0.7457)">值</text><text transform="translate(373.92 316.43) scale(0.7888 0.7164)">放</text><text transform="translate(455.42 314.45) scale(0.7094 0.7020)">送</text><text transform="translate(208.80 320.72) scale(0.7986 0.7665)">超</text><text transform="translate(292.68 318.63) scale(0.8151 0.7550)">值</text><text transform="translate(373.85 315.70) scale(0.7986 0.7254)">放</text><text transform="translate(456.37 313.70) scale(0.7182 0.7107)">送</text><text transform="translate(206.71 320.05) scale(0.8084 0.7760)">超</text><text transform="translate(291.62 317.94) scale(0.8251 0.7643)">值</text><text transform="translate(373.79 314.97) scale(0.8084 0.7343)">放</text><text transform="translate(457.32 312.95) scale(0.7270 0.7195)">送</text><text transform="translate(204.61 319.39) scale(0.8183 0.7854)">超</text><text transform="translate(290.56 317.24) scale(0.8352 0.7735)">值</text><text transform="translate(373.73 314.24) scale(0.8183 0.7432)">放</text><text transform="translate(458.27 312.19) scale(0.7359 0.7282)">送</text><text transform="translate(202.52 318.72) scale(0.8281 0.7948)">超</text><text transform="translate(289.50 316.55) scale(0.8452 0.7828)">值</text><text transform="translate(373.66 313.51) scale(0.8281 0.7521)">放</text><text transform="translate(459.23 311.44) scale(0.7447 0.7370)">送</text><text transform="translate(200.43 318.05) scale(0.8379 0.8043)">超</text><text transform="translate(288.43 315.86) scale(0.8552 0.7921)">值</text><text transform="translate(373.60 312.78) scale(0.8379 0.7611)">放</text><text transform="translate(460.18 310.68) scale(0.7535 0.7457)">送</text><text transform="translate(198.33 317.38) scale(0.8477 0.8137)">超</text><text transform="translate(287.37 315.16) scale(0.8653 0.8014)">值</text><text transform="translate(373.54 312.05) scale(0.8477 0.7700)">放</text><text transform="translate(461.13 309.93) scale(0.7624 0.7545)">送</text><text transform="translate(196.24 316.71) scale(0.8576 0.8231)">超</text><text transform="translate(286.31 314.47) scale(0.8753 0.8107)">值</text><text transform="translate(373.47 311.32) scale(0.8576 0.7789)">放</text><text transform="translate(462.08 309.17) scale(0.7712 0.7632)">送</text><text transform="translate(194.14 316.05) scale(0.8674 0.8326)">超</text><text transform="translate(285.25 313.77) scale(0.8853 0.8200)">值</text><text transform="translate(373.41 310.59) scale(0.8674 0.7878)">放</text><text transform="translate(463.03 308.42) scale(0.7800 0.7719)">送</text><text transform="translate(192.05 315.38) scale(0.8772 0.8420)">超</text><text transform="translate(284.19 313.08) scale(0.8953 0.8293)">值</text><text transform="translate(373.35 309.86) scale(0.8772 0.7967)">放</text><text transform="translate(463.99 307.67) scale(0.7889 0.7807)">送</text><text transform="translate(189.96 314.71) scale(0.8870 0.8514)">超</text><text transform="translate(283.12 312.39) scale(0.9054 0.8386)">值</text><text transform="translate(373.28 309.13) scale(0.8870 0.8057)">放</text><text transform="translate(464.94 306.91) scale(0.7977 0.7894)">送</text><text transform="translate(187.86 314.04) scale(0.8969 0.8609)">超</text><text transform="translate(282.06 311.69) scale(0.9154 0.8478)">值</text><text transform="translate(373.22 308.40) scale(0.8969 0.8146)">放</text><text transform="translate(465.89 306.16) scale(0.8065 0.7982)">送</text><text transform="translate(185.77 313.38) scale(0.9067 0.8703)">超</text><text transform="translate(281.00 311.00) scale(0.9254 0.8571)">值</text><text transform="translate(373.16 307.67) scale(0.9067 0.8235)">放</text><text transform="translate(466.84 305.40) scale(0.8154 0.8069)">送</text><text transform="translate(183.68 312.71) scale(0.9165 0.8797)">超</text><text transform="translate(279.94 310.31) scale(0.9355 0.8664)">值</text><text transform="translate(373.09 306.94) scale(0.9165 0.8324)">放</text><text transform="translate(467.79 304.65) scale(0.8242 0.8157)">送</text><text transform="translate(181.58 312.04) scale(0.9263 0.8891)">超</text><text transform="translate(278.88 309.61) scale(0.9455 0.8757)">值</text><text transform="translate(373.03 306.21) scale(0.9263 0.8414)">放</text><text transform="translate(468.75 303.90) scale(0.8331 0.8244)">送</text><text transform="translate(179.49 311.37) scale(0.9362 0.8986)">超</text><text transform="translate(277.81 308.92) scale(0.9555 0.8850)">值</text><text transform="translate(372.97 305.48) scale(0.9362 0.8503)">放</text><text transform="translate(469.70 303.14) scale(0.8419 0.8331)">送</text><text transform="translate(177.39 310.70) scale(0.9460 0.9080)">超</text><text transform="translate(276.75 308.23) scale(0.9655 0.8943)">值</text><text transform="translate(372.90 304.75) scale(0.9460 0.8592)">放</text><text transform="translate(470.65 302.39) scale(0.8507 0.8419)">送</text><text transform="translate(175.30 310.04) scale(0.9558 0.9174)">超</text><text transform="translate(275.69 307.53) scale(0.9756 0.9036)">值</text><text transform="translate(372.84 304.02) scale(0.9558 0.8681)">放</text><text transform="translate(471.60 301.63) scale(0.8596 0.8506)">送</text><text transform="translate(173.21 309.37) scale(0.9656 0.9269)">超</text><text transform="translate(274.63 306.84) scale(0.9856 0.9129)">值</text><text transform="translate(372.78 303.29) scale(0.9656 0.8771)">放</text><text transform="translate(472.55 300.88) scale(0.8684 0.8594)">送</text><text transform="translate(171.11 308.70) scale(0.9755 0.9363)">超</text><text transform="translate(273.57 306.15) scale(0.9956 0.9222)">值</text><text transform="translate(372.71 302.56) scale(0.9755 0.8860)">放</text><text transform="translate(473.51 300.12) scale(0.8772 0.8681)">送</text><text transform="translate(169.02 308.03) scale(0.9853 0.9457)">超</text><text transform="translate(272.50 305.45) scale(1.0057 0.9314)">值</text><text transform="translate(372.65 301.84) scale(0.9853 0.8949)">放</text><text transform="translate(474.46 299.37) scale(0.8861 0.8769)">送</text><text transform="translate(166.92 307.37) scale(0.9951 0.9552)">超</text><text transform="translate(271.44 304.76) scale(1.0157 0.9407)">值</text><text transform="translate(372.59 301.11) scale(0.9951 0.9038)">放</text><text transform="translate(475.41 298.62) scale(0.8949 0.8856)">送</text><text transform="translate(164.83 306.70) scale(1.0049 0.9646)">超</text><text transform="translate(270.38 304.07) scale(1.0257 0.9500)">值</text><text transform="translate(372.52 300.38) scale(1.0049 0.9128)">放</text><text transform="translate(476.36 297.86) scale(0.9037 0.8944)">送</text><text transform="translate(162.74 306.03) scale(1.0148 0.9740)">超</text><text transform="translate(269.32 303.37) scale(1.0357 0.9593)">值</text><text transform="translate(372.46 299.65) scale(1.0148 0.9217)">放</text><text transform="translate(477.31 297.11) scale(0.9126 0.9031)">送</text><text transform="translate(160.64 305.36) scale(1.0246 0.9835)">超</text><text transform="translate(268.26 302.68) scale(1.0458 0.9686)">值</text><text transform="translate(372.40 298.92) scale(1.0246 0.9306)">放</text><text transform="translate(478.26 296.35) scale(0.9214 0.9118)">送</text><text transform="translate(158.55 304.69) scale(1.0344 0.9929)">超</text><text transform="translate(267.19 301.98) scale(1.0558 0.9779)">值</text><text transform="translate(372.33 298.19) scale(1.0344 0.9395)">放</text><text transform="translate(479.22 295.60) scale(0.9302 0.9206)">送</text><text transform="translate(156.45 304.03) scale(1.0442 1.0023)">超</text><text transform="translate(266.13 301.29) scale(1.0658 0.9872)">值</text><text transform="translate(372.27 297.46) scale(1.0442 0.9485)">放</text><text transform="translate(480.17 294.85) scale(0.9391 0.9293)">送</text><text transform="translate(154.36 303.36) scale(1.0541 1.0117)">超</text><text transform="translate(265.07 300.60) scale(1.0759 0.9965)">值</text><text transform="translate(372.21 296.73) scale(1.0541 0.9574)">放</text><text transform="translate(481.12 294.09) scale(0.9479 0.9381)">送</text><text transform="translate(152.27 302.69) scale(1.0639 1.0212)">超</text><text transform="translate(264.01 299.90) scale(1.0859 1.0057)">值</text><text transform="translate(372.14 296.00) scale(1.0639 0.9663)">放</text><text transform="translate(482.07 293.34) scale(0.9568 0.9468)">送</text><text transform="translate(150.17 302.02) scale(1.0737 1.0306)">超</text><text transform="translate(262.95 299.21) scale(1.0959 1.0150)">值</text><text transform="translate(372.08 295.27) scale(1.0737 0.9752)">放</text><text transform="translate(483.02 292.58) scale(0.9656 0.9556)">送</text><text transform="translate(148.08 301.36) scale(1.0835 1.0400)">超</text><text transform="translate(261.88 298.52) scale(1.1059 1.0243)">值</text><text transform="translate(372.02 294.54) scale(1.0835 0.9842)">放</text><text transform="translate(483.98 291.83) scale(0.9744 0.9643)">送</text><text transform="translate(145.98 300.69) scale(1.0934 1.0495)">超</text><text transform="translate(260.82 297.82) scale(1.1160 1.0336)">值</text><text transform="translate(371.95 293.81) scale(1.0934 0.9931)">放</text><text transform="translate(484.93 291.07) scale(0.9833 0.9731)">送</text><text transform="translate(143.89 300.02) scale(1.1032 1.0589)">超</text><text transform="translate(259.76 297.13) scale(1.1260 1.0429)">值</text><text transform="translate(371.89 293.08) scale(1.1032 1.0020)">放</text><text transform="translate(485.88 290.32) scale(0.9921 0.9818)">送</text><text transform="translate(145.89 301.02) scale(1.1032 1.0589)">超</text><text transform="translate(147.89 302.02) scale(1.1032 1.0589)">超</text><text transform="translate(261.76 298.13) scale(1.126 1.0429)">值</text><text transform="translate(263.76 299.13) scale(1.126 1.0429)">值</text><text transform="translate(373.89 294.08) scale(1.1032 1.002)">放</text><text transform="translate(375.89 295.08) scale(1.1032 1.002)">放</text><text transform="translate(487.88 291.32) scale(0.9921 0.9818)">送</text><text transform="translate(489.88 292.32) scale(0.9921 0.9818)">送</text></g><path d="M371 204L374.500 204L375.500 300L379 349L373.500 349L372 300z" fill="#fff"/><path d="M386.500 349L388.500 328L391 349z" fill="#fff"/><rect x="130" y="190" width="480" height="140" fill="url(#fg)" mask="url(#tm)"/></svg><!--/TEXT3D-->
  <div id="dock">
    <div id="dockhead"></div>
    <div id="iconcol"></div>
    <div id="dockgap"></div>
    <div id="panels">
      <div class="tabrow" style="top:0">
        <div class="ptab off" style="left:0;width:37px">颜色</div>
        <div class="ptab on" style="left:37px;width:36px">色板</div>
        <svg class="pmenu" viewBox="0 0 16 9"><path d="M0 2h5l-2.5 3z" fill="#d0d0d0"/><path d="M6 1h10M6 4h10M6 7h10" stroke="#d0d0d0" stroke-width="1.4"/></svg>
      </div>
      <div class="tabrow" style="top:21px">
        <div class="ptab on" style="left:0;width:37px">属性</div>
        <svg class="pmenu" viewBox="0 0 16 9"><path d="M0 2h5l-2.5 3z" fill="#d0d0d0"/><path d="M6 1h10M6 4h10M6 7h10" stroke="#d0d0d0" stroke-width="1.4"/></svg>
      </div>
      <div class="tabrow" style="top:41px">
        <div class="ptab off" style="left:0;width:29px">3D</div>
        <div class="ptab on" style="left:29px;width:38px">图层</div>
        <div class="ptab off" style="left:67px;width:37px">通道</div>
        <div class="ptab off" style="left:104px;width:37px">路径</div>
        <svg class="pmenu" viewBox="0 0 16 9"><path d="M0 2h5l-2.5 3z" fill="#d0d0d0"/><path d="M6 1h10M6 4h10M6 7h10" stroke="#d0d0d0" stroke-width="1.4"/></svg>
      </div>
      <div id="layers">
        <!-- filter row -->
        <div class="dd" style="left:5px;top:4px;width:70px;height:20px"></div>
        <div class="lbl" style="left:27px;top:6px">类型</div>
        <!-- blend row -->
        <div class="dd" style="left:5px;top:31px;width:110px;height:21px"></div>
        <div class="lbl" style="left:13px;top:33px">正常</div>
        <div class="lbl" style="left:123px;top:33px">不透明度:</div>
        <div class="vbox" style="left:180px;top:31px;width:36px;height:21px">100%</div>
        <div class="abtn" style="left:215px;top:31px;width:21px;height:21px"></div>
        <div class="abs" style="left:0;top:56px;width:250px;height:1px;background:#474747"></div>
        <!-- lock row -->
        <div class="lbl" style="left:5px;top:62px">锁定:</div>
        <div class="lbl" style="left:147px;top:62px">填充:</div>
        <div class="vbox" style="left:180px;top:60px;width:36px;height:21px">100%</div>
        <div class="abtn" style="left:215px;top:60px;width:21px;height:21px"></div>
        <!-- layers -->
        <div id="layempty"></div><div id="layscroll"></div>
        <div class="lrow" style="top:85px;border-top:1px solid #3c3c3c;height:32px">
          <div class="abs" style="left:30px;top:0;width:206px;height:30px;background:#56627a"></div>
          <div class="lbl" style="left:76px;top:8px;color:#fff">超值放送</div>
        </div>
        <div class="lrow" style="top:117px;height:30px">
          <div class="abs" style="left:34px;top:3px;width:32px;height:24px;background:#fff;border-top:1px solid #222;border-bottom:1px solid #222"></div>
          <div class="lbl" style="left:77px;top:7px;font-style:italic">背景</div>
        </div>
      </div>
      <div id="laybar"></div>
    </div>
  </div>
  <!--DOCKI--><svg class="abs" style="left:685px;top:66px" width="291" height="474" viewBox="685 66 291 474"><path d="M715 73l3.500 -3v6zM719.500 73l3.500 -3v6z" fill="#d8d8d8" transform="translate(-3 0)"/><path d="M965 70l3.500 3l-3.500 3zM969.500 70l3.500 3l-3.500 3z" fill="#d8d8d8"/><path d="M695 83h19" stroke="#2e2e2e" stroke-width="3" stroke-dasharray="1 1"/><path d="M695 125h19" stroke="#2e2e2e" stroke-width="3" stroke-dasharray="1 1"/><path d="M695 194h19" stroke="#2e2e2e" stroke-width="3" stroke-dasharray="1 1"/><path d="M695 235h19" stroke="#2e2e2e" stroke-width="3" stroke-dasharray="1 1"/><path d="M695 304h19" stroke="#2e2e2e" stroke-width="3" stroke-dasharray="1 1"/><path d="M685 119.500h38" stroke="#2c2c2c"/><path d="M685 120.500h38" stroke="#3c3c3c"/><path d="M685 121.500h38" stroke="#5e5e5e"/><path d="M685 188.500h38" stroke="#2c2c2c"/><path d="M685 189.500h38" stroke="#3c3c3c"/><path d="M685 190.500h38" stroke="#5e5e5e"/><path d="M685 229.500h38" stroke="#2c2c2c"/><path d="M685 230.500h38" stroke="#3c3c3c"/><path d="M685 231.500h38" stroke="#5e5e5e"/><path d="M685 298.500h38" stroke="#2c2c2c"/><path d="M685 299.500h38" stroke="#3c3c3c"/><path d="M685 300.500h38" stroke="#5e5e5e"/><path d="M685 339.500h38" stroke="#2c2c2c"/><path d="M685 340.500h38" stroke="#3c3c3c"/><path d="M685 341.500h38" stroke="#5e5e5e"/><rect x="698.500" y="95.500" width="4" height="4" fill="none" stroke="#c4c4c4"/><rect x="698.500" y="101.500" width="4" height="4" fill="none" stroke="#c4c4c4"/><rect x="698" y="107" width="5" height="4" fill="#c4c4c4"/><path d="M706 111c6 -3 7 -10 1 -13" fill="none" stroke="#c4c4c4" stroke-width="3"/><path d="M704 98l6 -3v6z" fill="#c4c4c4"/><path d="M700 144h11v9h-11z" fill="#c4c4c4"/><path d="M701 143l-3 -8l3 2zM705 143l-1 -9l3 3zM709 143l2 -8l2 3l-2 5z" fill="#c4c4c4"/><path d="M698 137l5 6M713 136l-4 7" stroke="#c4c4c4" stroke-width="1.500"/><path d="M697 166c5 -2 8 0 10 2l8 -1v2l-8 1c-3 2 -7 1 -10 -4z" fill="#c4c4c4"/><path d="M697 176l10 -1c2 -2 6 -2 8 2c-3 1 -5 2 -8 0l-10 1z" fill="#c4c4c4"/><path d="M696 205h5M696 208h5M696 211h5M696 214h5" stroke="#c4c4c4" stroke-width="1.400"/><path d="M706 203a2.500 2.500 0 0 1 3.500 0c1 2 -0.500 3 -0.500 6h4v4h-11v-4h4c0 -3 -1 -4 0 -6z" fill="#c4c4c4"/><path d="M702 216.500h11" stroke="#c4c4c4" stroke-width="1.600"/><text x="695" y="260.500" font-family="Liberation Sans,sans-serif" font-size="18" fill="#c4c4c4" stroke="#c4c4c4" stroke-width="0.300">A</text><path d="M711.500 245v17" stroke="#c4c4c4" stroke-width="1.400"/><path d="M704 275h8v2h-1.500v12h-2v-12h-2v12h-2v-7a3.600 3.600 0 0 1 -0.500 -7.200z" fill="#c4c4c4"/><path d="M698 316l12 12" stroke="#c4c4c4" stroke-width="3" stroke-linecap="round"/><path d="M711 315l-13 14" stroke="#c4c4c4" stroke-width="2.400" stroke-linecap="round"/><circle cx="698" cy="316" r="3" fill="#c4c4c4"/><circle cx="697" cy="315" r="1.500" fill="#535353"/><path d="M708 313l5 1l-2 4z" fill="#c4c4c4"/><circle cx="698.500" cy="329" r="2.600" fill="#c4c4c4"/><circle cx="711" cy="328.500" r="2.600" fill="#c4c4c4"/><circle cx="711" cy="328.500" r="1" fill="#535353"/></svg><!--/DOCKI-->
  <!--LAYI--><svg class="abs" style="left:726px;top:138px" width="250" height="402" viewBox="726 138 250 402"><circle cx="741" cy="149.500" r="3.200" fill="none" stroke="#c8c8c8" stroke-width="1.500"/><path d="M738.500 152.500l-3 3.500" stroke="#c8c8c8" stroke-width="1.800"/><path d="M790.500 149.500l3 -3.500l3 3.500zM790.500 152.500l3 3.500l3 -3.500z" fill="#e0e0e0"/><rect x="823" y="146" width="12" height="10" fill="none" stroke="#c8c8c8" stroke-width="1.400"/><path d="M825 154l3 -4l2 2l1.500 -1.500l2 3.500z" fill="#c8c8c8"/><circle cx="852" cy="151" r="5.500" fill="#9a9a9a" stroke="#c8c8c8" stroke-width="1"/><path d="M848 155a5.500 5.500 0 0 1 8 -8z" fill="#c8c8c8"/><text x="875.500" y="157" text-anchor="middle" font-family="Liberation Serif,serif" font-size="16" font-weight="bold" fill="#c8c8c8">T</text><rect x="897" y="147" width="8" height="8" fill="none" stroke="#c8c8c8" stroke-width="1.200"/><rect x="895" y="145" width="3" height="3" fill="#c8c8c8"/><rect x="904" y="145" width="3" height="3" fill="#c8c8c8"/><rect x="895" y="154" width="3" height="3" fill="#c8c8c8"/><rect x="904" y="154" width="3" height="3" fill="#c8c8c8"/><path d="M922.500 145.500h4.500l3 3v7.500h-7.500z" fill="none" stroke="#c8c8c8" stroke-width="1.200"/><rect x="919" y="151" width="6" height="6" fill="#a0a0a0"/><rect x="953.500" y="144.500" width="7" height="15" rx="1" fill="#3c3c3c" stroke="#2c2c2c"/><rect x="954" y="145" width="6" height="6" fill="#8a8a8a"/><path d="M831.500 177.500l3 -3.500l3 3.500zM831.500 180.500l3 3.500l3 -3.500z" fill="#e0e0e0"/><path d="M948 177.5h7l-3.500 3.500z" fill="#e8e8e8"/><path d="M948 206.5h7l-3.500 3.500z" fill="#e8e8e8"/><rect x="770" y="203" width="11" height="11" fill="#b0b0b0"/><path d="M770 203h4v4h-4zM777 203h4v4h-4zM773.500 206.500h4v4h-4zM770 210h4v4h-4zM777 210h4v4h-4z" fill="#e4e4e4"/><path d="M806 202l-9 8l2 2z" fill="#c8c8c8"/><path d="M790 214c2 -1 3 -4 6 -4l2 2c-1 3 -4 3 -8 2z" fill="#c8c8c8"/><path d="M819.500 203v12M813.500 209h12" stroke="#c8c8c8" stroke-width="1.200"/><path d="M819.500 201.500l2.500 3h-5zM819.500 216.500l2.500 -3h-5zM812 209l3 -2.500v5zM827 209l-3 -2.500v5z" fill="#c8c8c8"/><rect x="837" y="208" width="10" height="7" fill="#c8c8c8"/><path d="M839.500 208v-2.500a2.500 2.500 0 0 1 5 0v2.500" fill="none" stroke="#c8c8c8" stroke-width="1.500"/><rect x="841.300" y="210" width="1.400" height="3" fill="#535353"/><path d="M755.500 224v61" stroke="#3e3e3e"/><path d="M735 239c3 -5 9 -5 12 0c-3 5 -9 5 -12 0z" fill="#bcbcbc"/><circle cx="741" cy="239" r="2.600" fill="#4a4a4a"/><circle cx="740.300" cy="238.2" r="0.900" fill="#ccc"/><path d="M735 270c3 -5 9 -5 12 0c-3 5 -9 5 -12 0z" fill="#bcbcbc"/><circle cx="741" cy="270" r="2.600" fill="#4a4a4a"/><circle cx="740.300" cy="269.2" r="0.900" fill="#ccc"/><rect x="934.500" y="268.500" width="8" height="6" fill="none" stroke="#c8c8c8"/><path d="M936.500 268v-2a2 2 0 0 1 4 0v2" fill="none" stroke="#c8c8c8" stroke-width="1.200"/><rect x="938" y="270" width="1.400" height="2.600" fill="#c8c8c8"/><rect x="774" y="528" width="7" height="6" rx="3" fill="none" stroke="#8a8a8a" stroke-width="1.300"/><rect x="779" y="528" width="7" height="6" rx="3" fill="none" stroke="#8a8a8a" stroke-width="1.300"/><text x="801" y="536" font-family="Liberation Serif,serif" font-style="italic" font-size="15" fill="#bdbdbd">fx</text><path d="M814 535h4l-2 2.500z" fill="#bdbdbd"/><rect x="828" y="526" width="13" height="10" fill="#bdbdbd"/><circle cx="834.500" cy="531" r="3" fill="#535353"/><circle cx="860" cy="531" r="5.500" fill="none" stroke="#bdbdbd" stroke-width="1.400"/><path d="M856 535a5.500 5.500 0 0 1 8 -8z" fill="#bdbdbd"/><path d="M868 535h4l-2 2.500z" fill="#bdbdbd"/><path d="M882 526h5l1.500 2h6.500v8h-13z" fill="#bdbdbd"/><path d="M909 526h11v11h-7l-4 -4z" fill="#bdbdbd"/><path d="M909 533h4v4" fill="none" stroke="#535353" stroke-width="1"/><path d="M936 527h10M939 526h4" stroke="#bdbdbd" stroke-width="1.400"/><path d="M937 529h8l-0.800 8h-6.400z" fill="#bdbdbd"/><path d="M939.500 530v6M942.500 530v6" stroke="#535353" stroke-width="0.900"/><path d="M753 520l4 -4v3z" fill="#d0d0d0"/><path d="M783 520.500h10" stroke="#6a6a6a" stroke-width="1" stroke-dasharray="3 2"/><path d="M951.500 488v30" stroke="#3e3e3e"/><rect x="758.500" y="225" width="35" height="28" fill="none" stroke="#fff" stroke-width="1" stroke-dasharray="9 17 18 10 18 17 18 10 9 0"/><rect x="760" y="227" width="32" height="23" fill="#1c1c1c"/><rect x="761" y="228" width="30" height="21" fill="#fff"/><path d="M765 228.0h4v3.500h-4zM773 228.0h4v3.500h-4zM781 228.0h4v3.500h-4zM789 228.0h2v3.500h-2zM761 231.5h4v3.500h-4zM769 231.5h4v3.500h-4zM777 231.5h4v3.500h-4zM785 231.5h4v3.500h-4zM765 235.0h4v3.500h-4zM773 235.0h4v3.500h-4zM781 235.0h4v3.500h-4zM789 235.0h2v3.500h-2zM761 238.5h4v3.500h-4zM769 238.5h4v3.500h-4zM777 238.5h4v3.500h-4zM785 238.5h4v3.500h-4zM765 242.0h4v3.500h-4zM773 242.0h4v3.500h-4zM781 242.0h4v3.500h-4zM789 242.0h2v3.500h-2zM761 245.5h4v3.500h-4zM769 245.5h4v3.500h-4zM777 245.5h4v3.500h-4zM785 245.5h4v3.500h-4z" fill="#cccccc"/><path d="M765 237.500l4 3.500h13l4 -3l-1 -2h-20z" fill="#6a6712"/><text x="763.500" y="238" font-family="Liberation Sans,Noto Sans CJK SC,sans-serif" font-weight="900" font-size="5.600" fill="#f6b81e" stroke="#f6b81e" stroke-width="0.500">超值放送</text></svg><!--/LAYI-->
  <!--CHROME--><svg class="abs" style="left:0;top:0" width="981" height="545" viewBox="0 0 981 545"><defs><linearGradient id="wb" x1="0" y1="0" x2="0" y2="1"><stop offset="0" stop-color="#636363"/><stop offset="1" stop-color="#4c4c4c"/></linearGradient></defs><path d="M871.500 0v19h102v-19" fill="url(#wb)" stroke="#3a3a3a"/><path d="M899.500 1v17.500M926.500 1v17.500" stroke="#3e3e3e"/><path d="M900.500 1v17M927.500 1v17M872.500 1v17" stroke="#6a6a6a" stroke-width="0.800"/><rect x="880" y="10" width="11" height="4" fill="#fff"/><rect x="908.500" y="6.500" width="9" height="7" fill="none" stroke="#fff" stroke-width="2"/><path d="M945.500 6.500l8.500 7.500M954 6.500l-8.500 7.500" stroke="#fff" stroke-width="2.600"/><path d="M0.500 545v-541.500a3 3 0 0 1 3 -3h974a3 3 0 0 1 3 3v541.500" fill="none" stroke="#1c1c1c"/><path d="M0 544.500h981" stroke="#1c1c1c"/><path d="M0 0h3l-3 3zM981 0h-3l3 3zM0 545h3l-3 -3zM981 545h-3l3 -3z" fill="#fff"/><path d="M4 540.500h973" stroke="#2c2c2c"/><path d="M976.800 33v508" stroke="#2c2c2c" stroke-width="1.400"/><path d="M3.800 33v508" stroke="#3a3a3a" stroke-width="1"/><path d="M866.500 16L867.500 27L872.500 38.500L877 32L888 29.300z" fill="#143f5c"/><path d="M868.300 17.800L886.500 29.200L878 29.800L875.300 33L872.800 26z" fill="#d2e9f4"/><path d="M875.300 33L878 29.800L881 29.800L874 37z" fill="#2f6e94"/></svg><!--/CHROME-->
</div>
</body>
</html>
